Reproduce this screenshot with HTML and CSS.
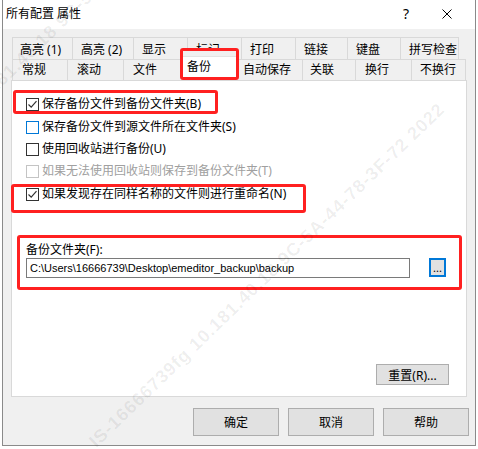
FILE: index.html
```html
<!DOCTYPE html>
<html lang="zh-CN">
<head>
    <meta charset="UTF-8">
    <meta name="viewport" content="width=device-width, initial-scale=1.0">
    <title>所有配置 属性</title>
    <link rel="stylesheet" href="styles.css">
</head>
<body>
    <div class="window">
        <div class="titlebar">
            <span class="title">所有配置 属性</span>
            <span class="tb-help">?</span>
            <span class="tb-close">
                <svg width="10" height="10" viewBox="0 0 10 10"><path d="M0.5 0.5 L9.5 9.5 M9.5 0.5 L0.5 9.5" stroke="#000" stroke-width="1" fill="none"/></svg>
            </span>
        </div>

        <div class="dialog">
            <div class="tabs">
                <div class="tabrow back">
                    <div class="tab">高亮 (1)</div>
                    <div class="tab">高亮 (2)</div>
                    <div class="tab">显示</div>
                    <div class="tab">标记</div>
                    <div class="tab">打印</div>
                    <div class="tab">链接</div>
                    <div class="tab">键盘</div>
                    <div class="tab">拼写检查</div>
                </div>
                <div class="tabrow front">
                    <div class="tab">常规</div>
                    <div class="tab">滚动</div>
                    <div class="tab">文件</div>
                    <div class="tab sel"><div class="sel-inner">备份</div></div>
                    <div class="tab">自动保存</div>
                    <div class="tab">关联</div>
                    <div class="tab">换行</div>
                    <div class="tab">不换行</div>
                </div>
            </div>

            <div class="panel">
                <div class="checks">
                    <div class="check mark mark-a">
                        <span class="box"><svg width="11" height="11" viewBox="0 0 11 11"><path d="M1.5 5.5 L4.2 8.2 L9.5 2.2" stroke="#333" stroke-width="1.2" fill="none"/></svg></span>
                        <span>保存备份文件到备份文件夹(B)</span>
                    </div>
                    <div class="check">
                        <span class="box focus"></span>
                        <span>保存备份文件到源文件所在文件夹(S)</span>
                    </div>
                    <div class="check">
                        <span class="box"></span>
                        <span>使用回收站进行备份(U)</span>
                    </div>
                    <div class="check disabled">
                        <span class="box"></span>
                        <span>如果无法使用回收站则保存到备份文件夹(T)</span>
                    </div>
                    <div class="check mark mark-b">
                        <span class="box"><svg width="11" height="11" viewBox="0 0 11 11"><path d="M1.5 5.5 L4.2 8.2 L9.5 2.2" stroke="#333" stroke-width="1.2" fill="none"/></svg></span>
                        <span>如果发现存在同样名称的文件则进行重命名(N)</span>
                    </div>
                </div>

                <div class="folder mark">
                    <div class="folder-label">备份文件夹(F):</div>
                    <div class="folder-row">
                        <div class="path">C:\Users\16666739\Desktop\emeditor_backup\backup</div>
                        <button class="browse">...</button>
                    </div>
                </div>

                <div class="reset-row">
                    <button class="btn reset">重置(R)...</button>
                </div>
            </div>

            <div class="footer">
                <button class="btn">确定</button>
                <button class="btn">取消</button>
                <button class="btn">帮助</button>
            </div>
        </div>
    </div>

    <div class="watermark">
        <span class="wm wm-1">IS-16666739fg 10.181.40.18 9C-5A-44-78-3F-72 2022</span>
        <span class="wm wm-2">IS-16666739fg 10.181.40.18 9C-5A-44-78-3F-72 2022</span>
    </div>
</body>
</html>
```

FILE: styles.css
```css
body, html {
    margin: 0;
    padding: 0;
    width: 478px;
    height: 449px;
    overflow: hidden;
    background-color: #fff;
}

body {
    position: relative;
    font-family: "Segoe UI", "Noto Sans", "Noto Sans CJK SC", sans-serif;
    font-size: 12px;
    color: #000;
}

.window {
    margin-left: 2px;
    width: 474px;
    height: 446px;
    box-sizing: border-box;
    border: 1px solid #8a8a8a;
    border-top: none;
    display: flex;
    flex-direction: column;
}

/* title bar */
.titlebar {
    height: 29px;
    flex: none;
    display: flex;
    align-items: center;
    padding-bottom: 2px;
    box-sizing: border-box;
    background-color: #fff;
}

.title {
    padding-left: 3px;
    line-height: 16px;
}

.tb-help {
    margin-left: auto;
    width: 46px;
    text-align: center;
    font-size: 14px;
    line-height: 16px;
}

.tb-close {
    width: 36px;
    margin-right: 10px;
    display: flex;
    justify-content: center;
}

/* dialog body */
.dialog {
    flex: 1;
    background-color: #f0f0f0;
    padding: 8px 8px 0 8px;
    display: flex;
    flex-direction: column;
}

.tabrow {
    display: flex;
    padding-left: 1px;
}

.tabrow.back {
    height: 22px;
}

.tabrow.front {
    height: 21px;
}

.tab {
    box-sizing: border-box;
    border: 1px solid #d9d9d9;
    border-bottom: none;
    margin-right: -1px;
    padding-left: 8px;
    white-space: nowrap;
    line-height: 16px;
    flex: none;
}

.back .tab {
    padding-top: 4px;
}

.front .tab {
    padding-top: 2px;
}

.back .tab:nth-child(1) { width: 61px; padding-left: 7px; }
.back .tab:nth-child(2) { width: 62px; }
.back .tab:nth-child(3) { width: 55px; }
.back .tab:nth-child(4) { width: 55px; }
.back .tab:nth-child(5) { width: 55px; }
.back .tab:nth-child(6) { width: 53px; }
.back .tab:nth-child(7) { width: 54px; }
.back .tab:nth-child(8) { width: 59px; }

.front .tab:nth-child(1) { width: 56px; padding-left: 9px; }
.front .tab:nth-child(2) { width: 57px; padding-left: 9px; }
.front .tab:nth-child(3) { width: 63px; padding-left: 9px; }
.front .tab:nth-child(5) { width: 68px; padding-left: 7px; }
.front .tab:nth-child(6) { width: 54px; padding-left: 7px; }
.front .tab:nth-child(7) { width: 57px; padding-left: 9px; }
.front .tab:nth-child(8) { width: 55px; }

/* the selected tab, with its red marker */
.front .tab.sel {
    position: relative;
    z-index: 1;
    width: 59px;
    height: 32px;
    margin: -11px -4px 0 -5px;
    padding: 5px 0 0 0;
    border: 3px solid #ff2020;
    border-radius: 3px;
    background-color: #f0f0f0;
}

.sel-inner {
    height: 21px;
    box-sizing: border-box;
    background-color: #fff;
    border-top: 1px solid #e3e3e3;
    padding: 2px 0 0 4px;
    line-height: 16px;
}

/* page */
.panel {
    flex: none;
    height: 317px;
    box-sizing: border-box;
    border: 1px solid #d9d9d9;
    background-color: #fff;
    display: flex;
    flex-direction: column;
}

.checks {
    padding: 9px 0 0 14px;
    display: flex;
    flex-direction: column;
    align-items: flex-start;
}

.check {
    display: flex;
    align-items: center;
    height: 22px;
    line-height: 14px;
    white-space: nowrap;
}

.check.disabled {
    color: #a0a0a0;
}

.box {
    width: 13px;
    height: 13px;
    box-sizing: border-box;
    border: 1px solid #333;
    background-color: #fff;
    margin-right: 3px;
    display: flex;
    align-items: center;
    justify-content: center;
    flex: none;
}

.box.focus {
    border-color: #0078d7;
}

.disabled .box {
    border-color: #c4c4c4;
}

.mark {
    border: 3px solid #ff2020;
    border-radius: 3px;
}

.mark-a {
    height: 14px;
    padding: 4px 14px 0 10px;
    margin-left: -13px;
    margin-bottom: 2px;
}

.mark-b {
    height: 14px;
    padding: 0 17px 9px 12px;
    margin-left: -15px;
    margin-top: 2px;
}

.folder {
    margin: 22px 4px 0 5px;
    padding: 3px 0 9px 6px;
}

.folder-label {
    height: 17px;
    line-height: 17px;
}

.folder-row {
    display: flex;
    align-items: flex-start;
    height: 20px;
}

.path {
    width: 384px;
    height: 20px;
    box-sizing: border-box;
    border: 1px solid #7a7a7a;
    padding-left: 3px;
    font-family: "Liberation Sans", Arial, sans-serif;
    font-size: 11px;
    line-height: 18px;
    white-space: nowrap;
}

.browse {
    margin-left: 19px;
    width: 17px;
    height: 19px;
    box-sizing: border-box;
    border: 2px solid #0078d7;
    background-color: #e1e1e1;
    padding: 0;
    font-family: inherit;
    font-size: 11px;
    line-height: 13px;
    color: #000;
}

.reset-row {
    margin-top: auto;
    display: flex;
    justify-content: flex-end;
    padding: 0 17px 11px 0;
}

.btn {
    background-color: #e1e1e1;
    border: 1px solid #adadad;
    padding: 0;
    font-family: inherit;
    font-size: 12px;
    color: #000;
}

.reset {
    width: 73px;
    height: 21px;
}

.footer {
    display: flex;
    justify-content: flex-end;
    gap: 9px;
    padding-top: 11px;
    margin-right: -2px;
}

.footer .btn {
    width: 86px;
    height: 28px;
}

/* faint diagonal watermark over the screenshot */
.watermark {
    position: absolute;
    left: 0;
    top: 0;
    width: 478px;
    height: 449px;
    overflow: hidden;
    pointer-events: none;
}

.wm {
    position: absolute;
    white-space: nowrap;
    font-family: "Liberation Sans", Arial, sans-serif;
    font-weight: bold;
    font-size: 18px;
    letter-spacing: 1px;
    line-height: 20px;
    color: rgba(0, 0, 0, 0.07);
    transform-origin: 0 50%;
    transform: rotate(-44deg);
}

.wm-1 {
    left: 92px;
    top: 434px;
}

.wm-2 {
    left: -130px;
    top: 196px;
}
```
